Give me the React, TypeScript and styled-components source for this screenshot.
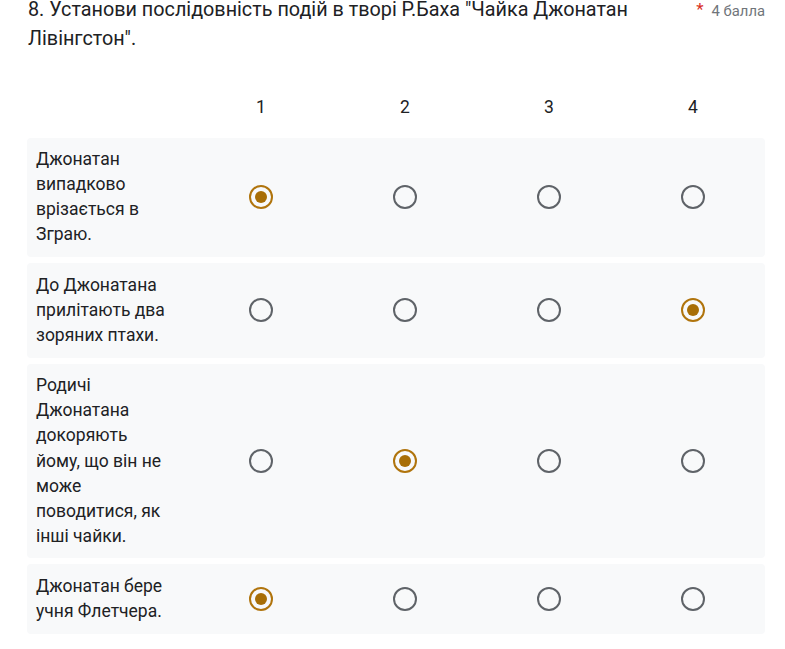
import React from "react";
import styled, { createGlobalStyle } from "styled-components";

const GlobalStyle = createGlobalStyle`
  html, body {
    margin: 0;
    padding: 0;
    background: #ffffff;
  }
  body {
    font-family: Roboto, "Noto Sans", Arial, sans-serif;
    color: #202124;
  }
`;

const Page = styled.div`
  width: 738px;
  margin: -4px 0 0 27px;
`;

const Header = styled.div`
  display: flex;
  align-items: flex-start;
`;

const Title = styled.div`
  flex: 1;
  padding-left: 1px;
  padding-right: 40px;
  font-size: 19.8px;
  line-height: 28.8px;
  color: #202124;
`;

const Points = styled.div`
  display: flex;
  align-items: flex-start;
  padding-top: 5px;
  white-space: nowrap;
`;

const Star = styled.span`
  color: #d93025;
  font-size: 17px;
  line-height: 17px;
  margin-right: 8px;
`;

const Score = styled.span`
  color: #70757a;
  font-size: 14.8px;
  line-height: 20px;
`;

const Grid = styled.div`
  margin-top: 29px;
  display: flex;
  flex-direction: column;
  gap: 6px;
`;

const HeadRow = styled.div`
  display: grid;
  grid-template-columns: 162px repeat(4, 1fr);
  height: 49px;
  align-items: center;
`;

const HeadCell = styled.div`
  text-align: center;
  font-size: 17.5px;
  line-height: 25px;
  color: #202124;
`;

const Row = styled.div`
  display: grid;
  grid-template-columns: 162px repeat(4, 1fr);
  align-items: center;
  background: #f8f9fa;
  border-radius: 4px;
  padding: 9.6px 0;
`;

const Label = styled.div`
  padding: 0 18px 0 9px;
  font-size: 17.5px;
  line-height: 25.1px;
  color: #202124;
`;

const Cell = styled.div`
  display: flex;
  justify-content: center;
  align-items: center;
`;

const Radio = styled.div<{ $checked: boolean }>`
  box-sizing: border-box;
  width: 24px;
  height: 24px;
  border-radius: 50%;
  border: 2.2px solid ${(p) => (p.$checked ? "#b0740c" : "#5f6368")};
  display: flex;
  align-items: center;
  justify-content: center;
  &::after {
    content: "";
    display: ${(p) => (p.$checked ? "block" : "none")};
    width: 12px;
    height: 12px;
    border-radius: 50%;
    background: #a86e06;
  }
`;

const rows: { label: string; checked: number }[] = [
  { label: "Джонатан випадково врізається в Зграю.", checked: 0 },
  { label: "До Джонатана прилітають два зоряних птахи.", checked: 3 },
  {
    label:
      "Родичі Джонатана докоряють йому, що він не може поводитися, як інші чайки.",
    checked: 1,
  },
  { label: "Джонатан бере учня Флетчера.", checked: 0 },
];

const cols = ["1", "2", "3", "4"];

export default function App() {
  return (
    <>
      <GlobalStyle />
      <Page>
        <Header>
          <Title>
            8. Установи послідовність подій в творі Р.Баха "Чайка Джонатан
            Лівінгстон".
          </Title>
          <Points>
            <Star>*</Star>
            <Score>4 балла</Score>
          </Points>
        </Header>
        <Grid>
          <HeadRow>
            <div />
            {cols.map((c) => (
              <HeadCell key={c}>{c}</HeadCell>
            ))}
          </HeadRow>
          {rows.map((r, i) => (
            <Row key={i}>
              <Label>{r.label}</Label>
              {cols.map((c, j) => (
                <Cell key={c}>
                  <Radio $checked={r.checked === j} />
                </Cell>
              ))}
            </Row>
          ))}
        </Grid>
      </Page>
    </>
  );
}
